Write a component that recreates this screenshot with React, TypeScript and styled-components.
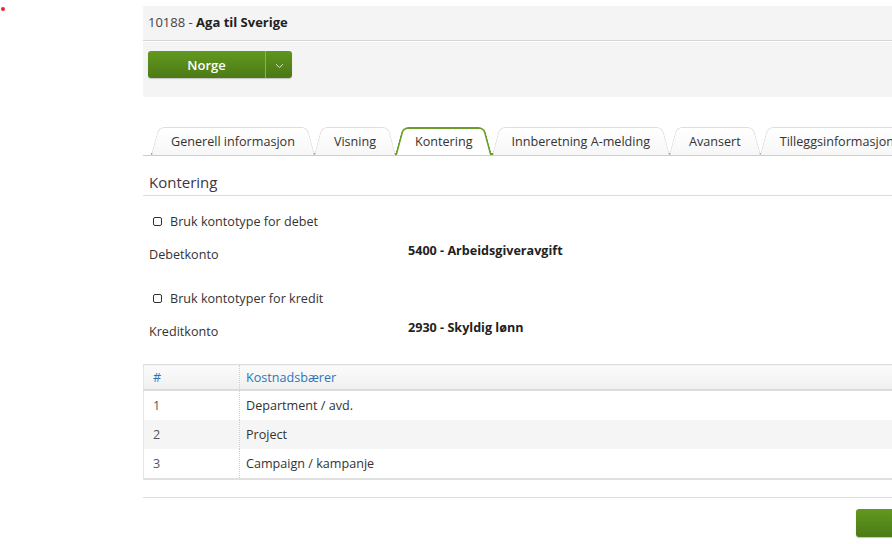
import styled, { createGlobalStyle } from 'styled-components';

const GlobalStyle = createGlobalStyle`
  html, body {
    margin: 0;
    padding: 0;
    overflow: hidden;
    background: #fff;
    font-family: "Open Sans", "Liberation Sans", sans-serif;
    font-size: 12.6px;
    color: #333;
  }
`;

const tabs = [
  'Generell informasjon',
  'Visning',
  'Kontering',
  'Innberetning A-melding',
  'Avansert',
  'Tilleggsinformasjon',
];

const rows = [
  { nr: 1, name: 'Department / avd.' },
  { nr: 2, name: 'Project' },
  { nr: 3, name: 'Campaign / kampanje' },
];

const App = () => {
  return (
    <Page>
      <GlobalStyle />
      <Dot />
      <Main>
        <Header>
          <TitleRow>
            10188 - <strong>Aga til Sverige</strong>
          </TitleRow>
          <SplitButton>
            <MainButton>Norge</MainButton>
            <CaretButton>
              <svg width="9" height="6" viewBox="0 0 9 6">
                <path d="M1 1.2 L4.5 4.6 L8 1.2" fill="none" stroke="#d9e8c6" strokeWidth="1" />
              </svg>
            </CaretButton>
          </SplitButton>
        </Header>

        <TabStrip>
          {tabs.map((t, i) => (
            <Tab key={t} $active={t === 'Kontering'} $last={i === tabs.length - 1}>
              {t}
            </Tab>
          ))}
        </TabStrip>

        <SectionTitle>Kontering</SectionTitle>

        <CheckRow>
          <Check />
          Bruk kontotype for debet
        </CheckRow>
        <FieldRow>
          <Label>Debetkonto</Label>
          <Value>5400 - Arbeidsgiveravgift</Value>
        </FieldRow>

        <CheckRow>
          <Check />
          Bruk kontotyper for kredit
        </CheckRow>
        <FieldRow>
          <Label>Kreditkonto</Label>
          <Value>2930 - Skyldig lønn</Value>
        </FieldRow>

        <Table>
          <thead>
            <tr>
              <Th $narrow>#</Th>
              <Th>Kostnadsbærer</Th>
            </tr>
          </thead>
          <tbody>
            {rows.map((r, i) => (
              <Tr key={r.nr} $odd={i % 2 === 1}>
                <Td $narrow>{r.nr}</Td>
                <Td>{r.name}</Td>
              </Tr>
            ))}
          </tbody>
        </Table>

        <Footer>
          <SaveButton />
        </Footer>
      </Main>
    </Page>
  );
};

const Page = styled.div`
  position: relative;
  width: 892px;
  height: 544px;
  padding: 6px 0 0 143px;
  box-sizing: border-box;
`;

const Dot = styled.span`
  position: absolute;
  left: 1px;
  top: 7px;
  width: 4px;
  height: 4px;
  border-radius: 50%;
  background: #e8262b;
`;

const Main = styled.div`
  width: 800px;
`;

const Header = styled.header`
  background: #f4f4f4;
  height: 91px;
`;

const TitleRow = styled.div`
  height: 34px;
  line-height: 33px;
  padding-left: 5px;
  border-bottom: 1px solid #d6d6d6;
  box-shadow: 0 1px 0 #fff;
  font-size: 13px;
  color: #444;

  strong {
    font-weight: 700;
    color: #222;
  }
`;

const SplitButton = styled.div`
  display: flex;
  margin: 10px 0 0 5px;
  height: 27px;
  width: 144px;
  border-radius: 3px;
  overflow: hidden;
  box-shadow: 0 1px 1px rgba(0, 0, 0, 0.2);
`;

const MainButton = styled.button`
  width: 117px;
  border: none;
  background: linear-gradient(#62991f, #4c7a16);
  color: #fff;
  font-family: inherit;
  font-size: 13px;
  font-weight: 600;
  padding: 0;
`;

const CaretButton = styled.button`
  flex: 1;
  border: none;
  border-left: 1px solid #8ab25a;
  background: linear-gradient(#5e951e, #4a7815);
  display: flex;
  align-items: center;
  justify-content: center;
  padding: 0;
  padding-top: 2px;
`;

const TabStrip = styled.nav`
  display: flex;
  margin-top: 30px;
  padding-left: 8px;
  height: 28px;
  border-bottom: 1px solid #c4d8a8;
`;

const Tab = styled.div<{ $active?: boolean; $last?: boolean }>`
  position: relative;
  z-index: ${({ $active }) => ($active ? 3 : 1)};
  padding: 0 20px;
  margin-right: -1px;
  height: 28px;
  line-height: 29px;
  white-space: nowrap;
  color: #333;
  box-sizing: border-box;
  ${({ $last }) => ($last ? '' : 'border-bottom: 2px solid #6b9d2b; margin-bottom: -1px;')}

  &::before,
  &::after {
    content: '';
    position: absolute;
    top: 0;
    bottom: ${({ $last }) => ($last ? '0' : '-2px')};
    width: 60%;
    z-index: -1;
    background: ${({ $active }) => ($active ? '#fff' : 'linear-gradient(#fff, #f7f7f7)')};
    border: ${({ $active }) => ($active ? '2px solid #6b9d2b' : '1px solid #dedede')};
    border-bottom: none;
    box-sizing: border-box;
  }

  &::before {
    left: 0;
    border-right: none;
    border-radius: 6px 0 0 0;
    transform: skewX(-15deg);
    transform-origin: bottom left;
  }

  &::after {
    right: 0;
    border-left: none;
    border-radius: 0 6px 0 0;
    transform: skewX(15deg);
    transform-origin: bottom right;
  }
`;

const SectionTitle = styled.h2`
  margin: 0;
  padding: 16px 0 0 6px;
  height: 40px;
  box-sizing: border-box;
  font-size: 15px;
  font-weight: 400;
  line-height: 20px;
  color: #3a3746;
  border-bottom: 1px solid #dcdcdc;
`;

const CheckRow = styled.label`
  display: flex;
  align-items: center;
  gap: 8px;
  padding-left: 10px;
  margin-top: 15px;
  height: 20px;
`;

const Check = styled.span`
  width: 9px;
  height: 9px;
  border: 1px solid #333;
  border-radius: 2px;
  box-sizing: border-box;
`;

const FieldRow = styled.div`
  display: grid;
  grid-template-columns: 259px 1fr;
  padding-left: 6px;
  margin-top: 11px;
  height: 31px;
`;

const Label = styled.div`
  padding-top: 4px;
`;

const Value = styled.div`
  font-weight: 700;
  color: #222;
  padding-top: 0;
`;

const Table = styled.table`
  margin-top: 14px;
  width: 100%;
  border-collapse: collapse;
  border-left: 1px solid #e6e6e6;
  border-top: 1px solid #dcdcdc;
  border-bottom: 2px solid #e0e0e0;
`;

const Th = styled.th<{ $narrow?: boolean }>`
  width: ${({ $narrow }) => ($narrow ? '86px' : 'auto')};
  height: 24px;
  padding: 0 0 0 ${({ $narrow }) => ($narrow ? '9px' : '6px')};
  text-align: left;
  font-weight: 400;
  color: #2e75b8;
  background: linear-gradient(#fbfbfb, #f0f0f0);
  border-bottom: 2px solid #dcdcdc;
  border-right: ${({ $narrow }) => ($narrow ? '1px dotted #cfcfcf' : 'none')};
`;

const Tr = styled.tr<{ $odd?: boolean }>`
  background: ${({ $odd }) => ($odd ? '#f5f5f5' : '#fff')};
`;

const Td = styled.td<{ $narrow?: boolean }>`
  height: 29px;
  padding: 0 0 0 ${({ $narrow }) => ($narrow ? '9px' : '6px')};
  color: ${({ $narrow }) => ($narrow ? '#555' : '#333')};
  border-right: ${({ $narrow }) => ($narrow ? '1px dotted #cfcfcf' : 'none')};
`;

const Footer = styled.footer`
  display: flex;
  justify-content: flex-end;
  margin-top: 17px;
  padding: 11px 7px 0 0;
  border-top: 1px solid #dcdcdc;
`;

const SaveButton = styled.button`
  width: 80px;
  height: 28px;
  border: none;
  border-radius: 3px;
  background: linear-gradient(#62991f, #4c7a16);
  box-shadow: 0 1px 1px rgba(0, 0, 0, 0.25);
`;

export default App;
